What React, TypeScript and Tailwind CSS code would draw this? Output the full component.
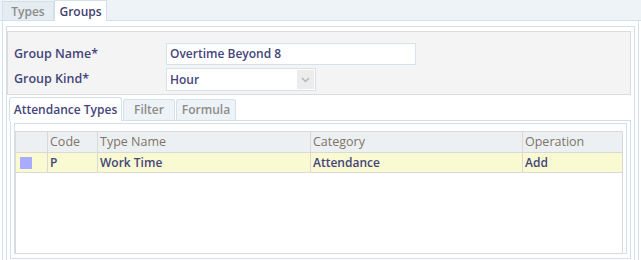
const font = { fontFamily: '"Open Sans", "Noto Sans", sans-serif' };

const App = () => {
  return (
    <div className="w-[641px] h-[260px] overflow-hidden bg-white text-[12px] leading-none" style={font}>
      {/* top tabs */}
      <div className="h-[21px] bg-[#eef3f7] border-b border-[#d3e0e9] flex items-end pl-[2px]">
        <div className="h-[19px] w-[52px] bg-[#e6edf2] border border-b-0 border-[#d3e0e9] flex items-center justify-center pt-[2px] text-[#8c8c8c] font-semibold">
          Types
        </div>
        <div className="h-[21px] w-[53px] -mb-px bg-white border border-b-0 border-[#d3e0e9] flex items-center justify-center pt-[1px] text-[#3f3f6e] font-semibold">
          Groups
        </div>
      </div>

      {/* outer frame */}
      <div className="h-[239px] mx-[2px] border-x border-[#d3e0e9] pt-[5px] px-[3px]">
        <div className="h-[300px] border border-[#d3e0e9] pt-[4px] pr-[3px]">
          {/* form box */}
          <div className="h-[64px] bg-[#f4f4f4] border border-[#dcdcdc] flex flex-col gap-[3px] pl-[6px] pt-[11px]">
            <div className="flex items-center">
              <span className="w-[152px] text-[12.5px] font-semibold text-[#45457a]">Group Name*</span>
              <div className="w-[250px] h-[22px] bg-white border border-[#d6e1ea] flex items-center pl-[3px] font-semibold text-[#45457a]">
                Overtime Beyond 8
              </div>
            </div>
            <div className="flex items-center">
              <span className="w-[152px] text-[12.5px] font-semibold text-[#45457a]">Group Kind*</span>
              <div className="w-[150px] h-[23px] bg-white border border-[#d6e1ea] flex items-center justify-between pl-[3px] pr-[1px] font-semibold text-[#45457a]">
                Hour
                <div className="w-[17px] h-[19px] bg-[#ececec] flex items-center justify-center">
                  <svg width="9" height="6" viewBox="0 0 9 6">
                    <path d="M1 1 L4.5 4.5 L8 1" fill="none" stroke="#b5b5b5" strokeWidth="1.5" />
                  </svg>
                </div>
              </div>
            </div>
          </div>

          {/* inner tabs */}
          <div className="h-[25px] flex items-end pl-[2px] gap-[1px]">
            <div className="h-[24px] w-[113px] -mb-px bg-white border border-b-0 border-[#d3e0e9] rounded-t-[3px] flex items-center justify-center text-[#45457a] font-semibold">
              Attendance Types
            </div>
            <div className="h-[21px] w-[52px] bg-[#eef3f7] border border-b-0 border-[#d3e0e9] rounded-t-[3px] flex items-center justify-center text-[#8c8c8c] font-semibold">
              Filter
            </div>
            <div className="h-[21px] w-[60px] bg-[#eef3f7] border border-b-0 border-[#d3e0e9] rounded-t-[3px] flex items-center justify-center text-[#8c8c8c] font-semibold">
              Formula
            </div>
          </div>

          {/* tab panel */}
          <div className="h-[139px] ml-[3px] border border-[#d3e0e9] pt-[2px] px-[3px] pb-[4px]">
            <div className="h-full border border-[#d3e0e9] pt-[7px] pr-[3px]">
              <div className="h-[123px] border border-[#d9d9d9]">
                <div className="flex h-[21px] bg-[#edf0f3] border-b border-[#d9d9d9] text-[12.5px] text-[#7d7468]">
                  <div className="w-[32px] border-r border-[#d9d9d9]" />
                  <div className="w-[50px] border-r border-[#d9d9d9] flex items-center pl-[2px]">Code</div>
                  <div className="w-[213px] border-r border-[#d9d9d9] flex items-center pl-[2px]">Type Name</div>
                  <div className="w-[212px] border-r border-[#d9d9d9] flex items-center pl-[2px]">Category</div>
                  <div className="flex-1 flex items-center pl-[2px]">Operation</div>
                </div>
                <div className="flex h-[20px] bg-[#f9f9d2] border-b border-[#d9d9d9] text-[#45457a] font-semibold">
                  <div className="w-[32px] border-r border-[#d9d9d9] flex items-center pl-[4px]">
                    <div className="w-[12px] h-[12px] bg-[#aaaaff]" />
                  </div>
                  <div className="w-[50px] border-r border-[#d9d9d9] flex items-center pl-[2px]">P</div>
                  <div className="w-[213px] border-r border-[#d9d9d9] flex items-center pl-[2px]">Work Time</div>
                  <div className="w-[212px] border-r border-[#d9d9d9] flex items-center pl-[2px]">Attendance</div>
                  <div className="flex-1 flex items-center pl-[2px]">Add</div>
                </div>
              </div>
            </div>
          </div>
        </div>
      </div>
    </div>
  );
};

export default App;
